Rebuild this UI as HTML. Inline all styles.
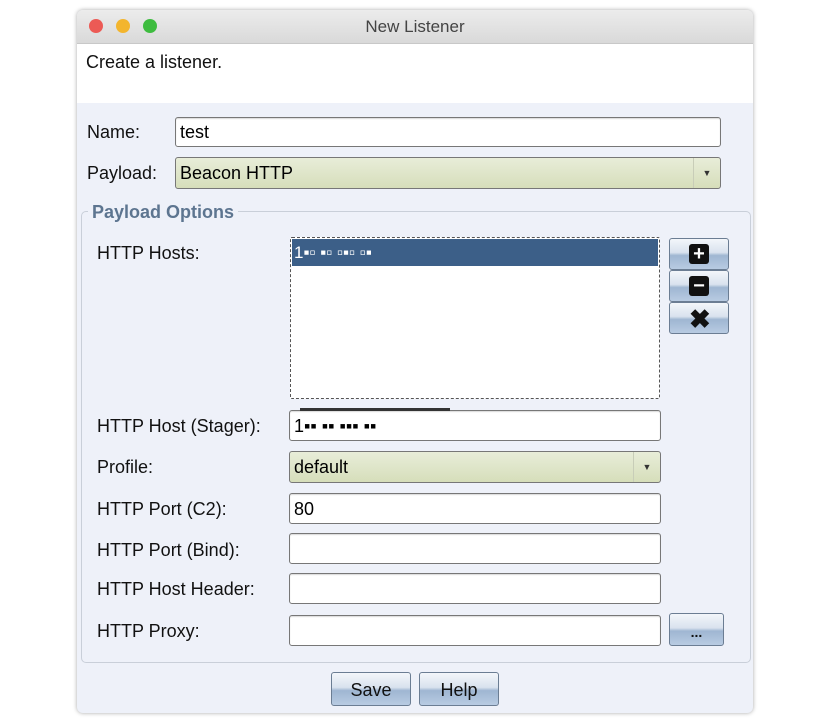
<!DOCTYPE html>
<html><head><style>
body{margin:0;width:830px;height:720px;background:#fff;position:relative;font-family:"Liberation Sans",sans-serif;overflow:hidden}
.a{position:absolute}
.win{left:77px;top:10px;width:676px;height:703px;background:#eef1f9;border-radius:6px;box-shadow:0 0 4px rgba(0,0,0,.35)}
.title{left:77px;top:10px;width:676px;height:33px;background:linear-gradient(#ececec,#d9d9d9);border-radius:6px 6px 0 0;border-bottom:1px solid #c8c8c8;text-align:center;font-size:17px;line-height:33px;color:#444}
.dot{width:14px;height:14px;border-radius:50%;top:19px}
.hdr{left:77px;top:44px;width:676px;height:59px;background:#fff}
.lbl{font-size:18px;color:#111}
.tf{background:#fff;border:1px solid #777;border-radius:3px;box-shadow:inset 0 1px 1px rgba(0,0,0,.15);box-sizing:border-box;font-size:18px;padding-left:4px;line-height:30px}
.cb{background:linear-gradient(#e8edd9,#d6deba);border:1px solid #777;border-radius:3px;box-sizing:border-box;font-size:18px;padding-left:4px;line-height:31px}
.arr{position:absolute;right:0;top:0;bottom:0;width:26px;border-left:1px solid #c8cdb8;font-size:9px;text-align:center;color:#333}
.btn{background:linear-gradient(#f3f6fa 0%,#d9e2ee 45%,#9fb6d2 55%,#b8cbe2 100%);border:1px solid #6b7d93;border-radius:3px;box-sizing:border-box;text-align:center;font-size:18px;color:#111}
.ib{width:60px;height:32px}
.ic{background:#111;border-radius:3px;width:20px;height:20px;position:absolute;left:19px;top:5px;color:#fff;font-weight:bold;font-size:20px;line-height:20px;text-align:center}
</style></head><body>
<div class="a win"></div>
<div class="a title">New Listener</div>
<div class="a dot" style="left:89px;background:#ec5a55"></div>
<div class="a dot" style="left:116px;background:#f3b52e"></div>
<div class="a dot" style="left:143px;background:#3ebc3f"></div>
<div class="a hdr"></div>
<div class="a lbl" style="left:86px;top:52px">Create a listener.</div>

<div class="a lbl" style="left:87px;top:122px">Name:</div>
<div class="a tf" style="left:175px;top:117px;width:546px;height:30px;line-height:29px">test</div>
<div class="a lbl" style="left:87px;top:163px">Payload:</div>
<div class="a cb" style="left:175px;top:157px;width:546px;height:32px">Beacon HTTP<div class="arr">▼</div></div>

<div class="a" style="left:81px;top:211px;width:668px;height:450px;border:1px solid #c9cfd9;border-radius:5px"></div>
<div class="a" style="left:88px;top:202px;padding:0 4px;background:#eef1f9;font-size:18px;font-weight:bold;color:#5d7590">Payload Options</div>

<div class="a lbl" style="left:97px;top:243px">HTTP Hosts:</div>
<div class="a" style="left:290px;top:237px;width:370px;height:162px;background:#fff;border:1px dashed #555;box-sizing:border-box;border-radius:2px"></div>
<div class="a" style="left:292px;top:239px;width:366px;height:27px;background:#3c5f88;color:#fff;font-size:17px;line-height:27px;padding-left:2px;box-sizing:border-box">1▪▫ ▪▫ ▫▪▫ ▫▪</div>
<div class="a btn ib" style="left:669px;top:238px"><div class="ic">+</div></div>
<div class="a btn ib" style="left:669px;top:270px"><div class="ic">−</div></div>
<div class="a btn ib" style="left:669px;top:302px"><div class="ic" style="background:none;color:#111;font-size:26px;top:5px;line-height:22px">✖</div></div>

<div class="a lbl" style="left:97px;top:416px">HTTP Host (Stager):</div>
<div class="a tf" style="left:289px;top:410px;width:372px;height:31px">1▪▪ ▪▪ ▪▪▪ ▪▪</div>
<div class="a" style="left:300px;top:408px;width:150px;height:3px;background:#333"></div>
<div class="a lbl" style="left:97px;top:457px">Profile:</div>
<div class="a cb" style="left:289px;top:451px;width:372px;height:32px">default<div class="arr">▼</div></div>
<div class="a lbl" style="left:97px;top:499px">HTTP Port (C2):</div>
<div class="a tf" style="left:289px;top:493px;width:372px;height:31px">80</div>
<div class="a lbl" style="left:97px;top:540px">HTTP Port (Bind):</div>
<div class="a tf" style="left:289px;top:533px;width:372px;height:31px"></div>
<div class="a lbl" style="left:97px;top:579px">HTTP Host Header:</div>
<div class="a tf" style="left:289px;top:573px;width:372px;height:31px"></div>
<div class="a lbl" style="left:97px;top:621px">HTTP Proxy:</div>
<div class="a tf" style="left:289px;top:615px;width:372px;height:31px"></div>
<div class="a btn" style="left:669px;top:613px;width:55px;height:33px;line-height:36px;font-size:14px;font-weight:bold">...</div>

<div class="a btn" style="left:331px;top:672px;width:80px;height:34px;line-height:34px">Save</div>
<div class="a btn" style="left:419px;top:672px;width:80px;height:34px;line-height:34px">Help</div>
</body></html>
